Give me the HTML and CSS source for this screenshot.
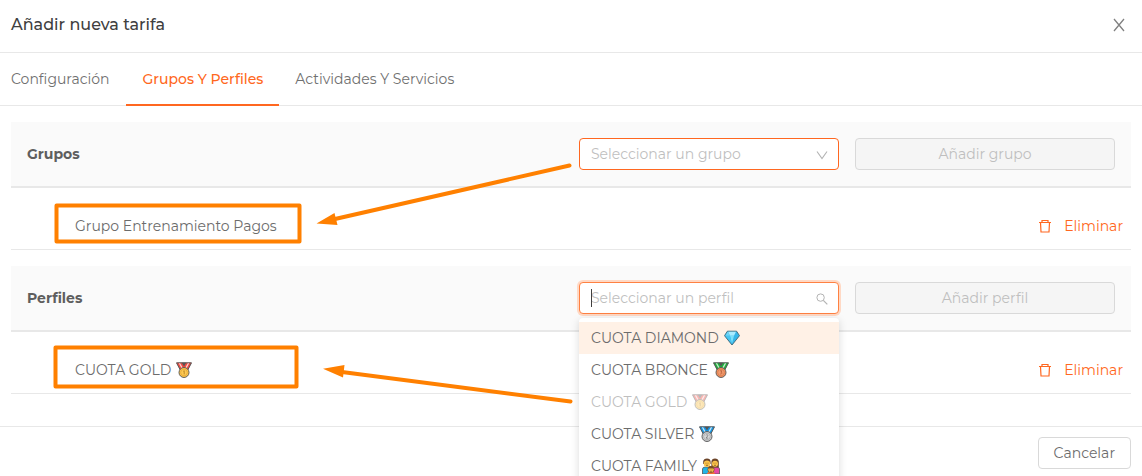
FILE: index.html
```html
<!DOCTYPE html>
<html lang="es">
<head>
<meta charset="utf-8">
<meta name="viewport" content="width=device-width, initial-scale=1">
<title>Añadir nueva tarifa</title>
<link rel="stylesheet" href="styles.css">
</head>
<body>
<svg class="defs" aria-hidden="true">
  <symbol id="trash" viewBox="0 0 14 14">
    <path d="M1 3.500h12M4 3.500v-2h6v2M2.500 3.500l.5 9.500h8l.5-9.500" fill="none" stroke="currentColor" stroke-width="1.2"/>
  </symbol>
  <symbol id="ribbon" viewBox="0 0 16 16">
    <path d="M.5.8h15L11.500 8.500h-7z" fill="currentColor" stroke="#555" stroke-width="1"/>
    <path d="M2.800 1.300h1.400l3.400 6H6zM13.200 1.300h-1.400l-3.400 6H10z" fill="#fff" opacity=".75"/>
    <path d="M5.800.8h4.400L8 4.600z" fill="#555"/>
  </symbol>
  <symbol id="gold" viewBox="0 0 16 16">
    <use href="#ribbon" color="#ee4a42"/>
    <circle cx="8" cy="10.500" r="5" fill="#fbc448" stroke="#555" stroke-width=".9"/>
    <circle cx="8" cy="10.500" r="3.300" fill="#fdca52" stroke="#e3a437" stroke-width=".7"/>
    <path d="M7.300 9.300l.9-.6v3.700" fill="none" stroke="#b98225" stroke-width=".9"/>
  </symbol>
  <symbol id="bronze" viewBox="0 0 16 16">
    <use href="#ribbon" color="#1fae3d"/>
    <circle cx="8" cy="10.500" r="5" fill="#f0905e" stroke="#555" stroke-width=".9"/>
    <circle cx="8" cy="10.500" r="3.300" fill="#f39c6f" stroke="#d67a4c" stroke-width=".7"/>
    <path d="M7 8.800h2L8 10.300c1.700 0 1.200 2-.9 1.700" fill="none" stroke="#b8603a" stroke-width=".8"/>
  </symbol>
  <symbol id="silver" viewBox="0 0 16 16">
    <use href="#ribbon" color="#1597e5"/>
    <circle cx="8" cy="10.500" r="5" fill="#c8cacc" stroke="#555" stroke-width=".9"/>
    <circle cx="8" cy="10.500" r="3.300" fill="#d6d8da" stroke="#a5a5a5" stroke-width=".7"/>
    <path d="M7 9.300c.6-1.200 2.200-.5 1.800.5L7 12.100h2.200" fill="none" stroke="#777" stroke-width=".8"/>
  </symbol>
  <symbol id="diamond" viewBox="0 0 16 16">
    <path d="M3.400 1.200h9.200l2.900 4.500L8 15 .5 5.700z" fill="#35b5e8" stroke="#3e6677" stroke-width=".9" stroke-linejoin="round"/>
    <path d="M4 1.800h8l-2 3.900H6z" fill="#a9ebff"/>
    <path d="M3.800 1.800L6 5.700H1.300z" fill="#6fd6f7"/>
    <path d="M6 5.700h4L8 13.800z" fill="#7be0fb"/>
    <path d="M1.500 6H6l1.800 7.400z" fill="#49c6f1"/>
  </symbol>
  <symbol id="family" viewBox="0 0 18 16">
    <path d="M.5 16v-5q0-2 3-2h2.500q3 0 3 2v5z" fill="#22b4e6" stroke="#555" stroke-width=".8"/>
    <path d="M9 16v-5q0-2 3-2h2.500q3 0 3 2v5z" fill="#e647a5" stroke="#555" stroke-width=".8"/>
    <path d="M1.200 6V3.500Q1.600.5 5 .5t3.600 3V6zM9.400 9.500v-6Q9.800.5 13 .5t3.800 3v6z" fill="#6b4429"/>
    <circle cx="5" cy="5.700" r="3.200" fill="#fcc449"/><circle cx="13" cy="5.700" r="3" fill="#fcc449"/>
    <path d="M3.600 5.200h.8m1.200 0h.8M11.600 5.200h.8m1.200 0h.8M4 7.300h2M12 7.300h2" stroke="#6b4429" stroke-width=".7"/>
    <path d="M5 16q0-2.500 4-2.500t4 2.500z" fill="#f26b38"/>
    <circle cx="9" cy="11.500" r="3.200" fill="#fcc449" stroke="#6b4429" stroke-width=".7"/>
    <path d="M6 10.400q.6-2.300 3-2.300t3 2.300z" fill="#744827"/>
    <path d="M7.600 11.800h.8m1.200 0h.8M8 13.300h2" stroke="#6b4429" stroke-width=".7"/>
  </symbol>
</svg>

<main class="modal">
  <header class="modal-header">
    <h1 class="title">Añadir nueva tarifa</h1>
    <button class="close" type="button" aria-label="Cerrar">
      <svg width="12" height="14" viewBox="0 0 12 14"><path d="M1 1l10 12M11 1L1 13" fill="none" stroke="currentColor" stroke-width="1.3"/></svg>
    </button>
  </header>

  <nav class="tabs">
    <a class="tab" href="#configuracion">Configuración</a>
    <a class="tab tab-active" href="#grupos" aria-current="page">Grupos Y Perfiles</a>
    <a class="tab" href="#actividades">Actividades Y Servicios</a>
  </nav>

  <div class="content">
    <section class="block" id="grupos">
      <div class="block-header">
        <h2 class="block-title">Grupos</h2>
        <div class="field">
          <select class="control select" aria-label="Grupo">
            <option>Seleccionar un grupo</option>
          </select>
          <svg class="field-icon" width="12" height="12" viewBox="0 0 12 12" aria-hidden="true"><path d="M1 2.500l5 7 5-7" fill="none" stroke="currentColor" stroke-width="1.1"/></svg>
        </div>
        <button class="button add" type="button" disabled>Añadir grupo</button>
      </div>
      <div class="row">
        <span class="row-name">Grupo Entrenamiento Pagos</span>
        <button class="remove" type="button"><svg width="14" height="14" aria-hidden="true"><use href="#trash"/></svg>Eliminar</button>
      </div>
    </section>

    <section class="block" id="perfiles">
      <div class="block-header">
        <h2 class="block-title">Perfiles</h2>
        <div class="field">
          <input class="control focused" type="text" role="combobox" aria-label="Perfil" aria-expanded="true" aria-controls="lista-perfiles" placeholder="Seleccionar un perfil">
          <span class="caret"></span>
          <svg class="field-icon" width="12" height="12" viewBox="0 0 12 12" aria-hidden="true"><circle cx="4.600" cy="4.600" r="3.700" fill="none" stroke="currentColor"/><path d="M7.300 7.300l4 4" stroke="currentColor" stroke-width="1.2"/></svg>
          <ul class="menu" id="lista-perfiles" role="listbox">
            <li class="option option-active" role="option" aria-selected="true">CUOTA DIAMOND<svg class="emoji"><use href="#diamond"/></svg></li>
            <li class="option" role="option">CUOTA BRONCE<svg class="emoji"><use href="#bronze"/></svg></li>
            <li class="option option-disabled" role="option" aria-disabled="true">CUOTA GOLD<svg class="emoji"><use href="#gold"/></svg></li>
            <li class="option" role="option">CUOTA SILVER<svg class="emoji"><use href="#silver"/></svg></li>
            <li class="option" role="option">CUOTA FAMILY<svg class="emoji emoji-wide"><use href="#family"/></svg></li>
          </ul>
        </div>
        <button class="button add" type="button" disabled>Añadir perfil</button>
      </div>
      <div class="row">
        <span class="row-name">CUOTA GOLD<svg class="emoji"><use href="#gold"/></svg></span>
        <button class="remove" type="button"><svg width="14" height="14" aria-hidden="true"><use href="#trash"/></svg>Eliminar</button>
      </div>
    </section>
  </div>

  <footer class="modal-footer">
    <button class="button cancel" type="button">Cancelar</button>
  </footer>

  <svg class="annotations" width="600" height="420" viewBox="0 0 600 420" aria-hidden="true">
    <g fill="none" stroke="#ff8000" stroke-width="4" stroke-linecap="round" stroke-linejoin="round">
      <rect x="56.500" y="205.500" width="243" height="36"/>
      <rect x="55.500" y="347.500" width="241" height="39"/>
      <path d="M569.500 165.500L335 219M570.500 401.500L342 372"/>
    </g>
    <path d="M316.500 223.500L334.500 213 337.500 225zM323 368.800L344.500 365 343 377.500z" fill="#ff8000"/>
  </svg>
</main>
</body>
</html>
```
FILE: styles.css
```css
* {
  box-sizing: border-box;
}

body {
  margin: 0;
  background: #fff;
  color: #6c6c6c;
  font: 400 14px/22px Montserrat, Inter, sans-serif;
}

button,
input,
select {
  font: inherit;
  color: inherit;
}

.defs {
  position: absolute;
  width: 0;
  height: 0;
}

.modal {
  position: relative;
  height: 100vh;
  overflow: hidden;
}

.modal-header {
  display: flex;
  align-items: center;
  justify-content: space-between;
  padding: 12px 17px 14px 11px;
  border-bottom: 1px solid #e8e8e8;
}

.title {
  margin: 0;
  color: #404040;
  font-size: 16px;
  line-height: 26px;
  font-weight: 500;
}

.close {
  display: flex;
  padding: 0;
  border: 0;
  background: none;
  color: #808080;
}

.tabs {
  display: flex;
  padding-right: 11px;
  box-shadow: inset 0 -1px #e8e8e8;
}

.tab {
  padding: 15px 16px 14px;
  border-bottom: 2px solid transparent;
  color: #707070;
  text-decoration: none;
}

.tab:first-child {
  padding-right: 17px;
  padding-left: 11px;
}

.tab-active {
  border-color: #ff6720;
  color: #ff6720;
  font-weight: 500;
}

.content {
  display: grid;
  gap: 16px;
  padding: 16px 11px 32px;
}

.block-header {
  display: flex;
  align-items: center;
  gap: 16px;
  padding: 16px;
  border-bottom: 2px solid #e8e8e8;
  background: #fafafa;
}

.block-title {
  flex: 1;
  margin: 0;
  color: #5e5e5e;
  font-size: 14px;
  line-height: 22px;
  font-weight: 700;
}

.field {
  position: relative;
  width: 260px;
}

.control {
  display: block;
  width: 100%;
  height: 32px;
  padding: 0 32px 0 11px;
  border: 1px solid #ff6720;
  border-radius: 4px;
  outline: 0;
  background: #fff;
  color: #bfbfbf;
  appearance: none;
}

.control::placeholder {
  color: #bfbfbf;
  opacity: 1;
}

.focused {
  border-color: #ff8142;
  box-shadow: 0 0 0 2px #ffd9c5;
}

.caret {
  position: absolute;
  top: 7px;
  left: 12px;
  width: 1px;
  height: 18px;
  background: #404040;
}

.field-icon {
  position: absolute;
  top: 11px;
  right: 11px;
  color: #b3b3b3;
  pointer-events: none;
}

.menu {
  position: absolute;
  z-index: 2;
  top: 36px;
  left: 0;
  width: 100%;
  margin: 0;
  padding: 4px 0;
  border-radius: 4px;
  background: #fff;
  box-shadow: 0 2px 8px rgba(0, 0, 0, 0.15);
  list-style: none;
}

.option {
  display: flex;
  align-items: center;
  padding: 5px 12px;
}

.option-active {
  background: #fff1e6;
}

.option-disabled {
  color: #bfbfbf;
}

.option-disabled .emoji {
  opacity: 0.4;
}

.emoji {
  width: 16px;
  height: 16px;
  margin-left: 5px;
}

.emoji-wide {
  width: 18px;
}

.button {
  height: 32px;
  padding: 0 15px;
  border: 1px solid #d9d9d9;
  border-radius: 4px;
  background: #fff;
}

.add {
  width: 260px;
}

.button:disabled {
  background: #f5f5f5;
  color: #bfbfbf;
}

.row {
  display: flex;
  align-items: center;
  justify-content: space-between;
  padding: 27px 8px 12px 64px;
  border-bottom: 1px solid #e8e8e8;
}

.row-name {
  display: flex;
  align-items: center;
}

.remove {
  display: flex;
  align-items: center;
  gap: 12px;
  padding: 0;
  border: 0;
  background: none;
  color: #ff6720;
}

.modal-footer {
  display: flex;
  justify-content: flex-end;
  padding: 10px 11px;
  border-top: 1px solid #e8e8e8;
}

.annotations {
  position: absolute;
  z-index: 1;
  top: 0;
  left: 0;
  pointer-events: none;
}
```
